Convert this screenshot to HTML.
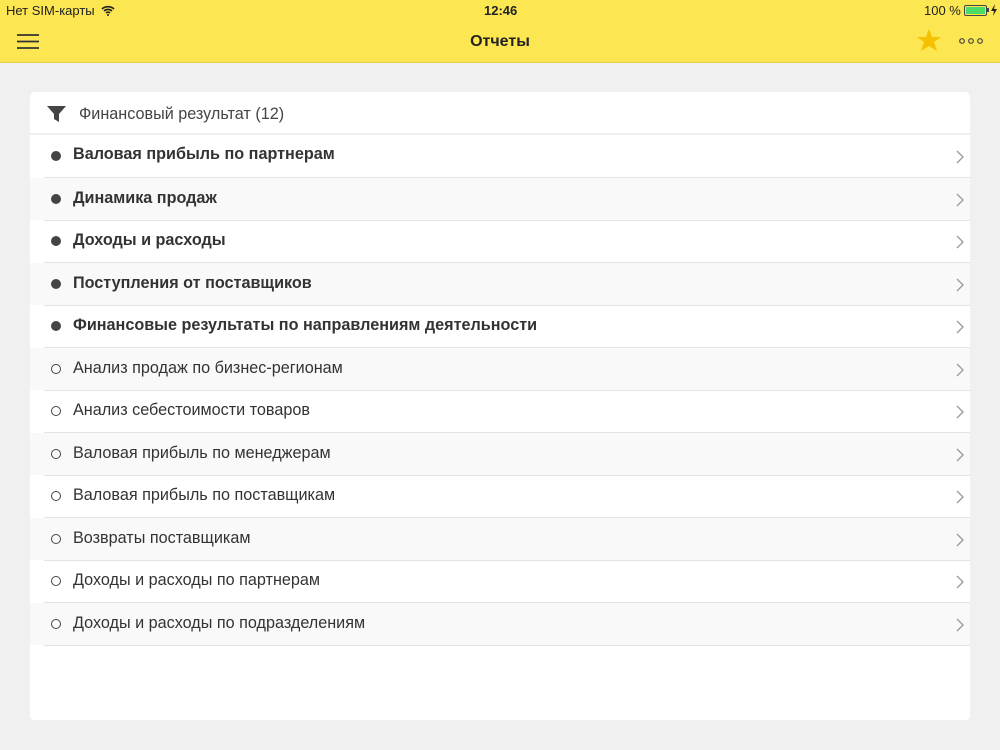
<!DOCTYPE html>
<html><head><meta charset="utf-8"><style>
body{margin:0;width:1000px;height:750px;background:#f0f0f0;font-family:"Liberation Sans",sans-serif;position:relative;overflow:hidden;color:#333}
.top{position:absolute;left:0;top:0;width:1000px;height:62px;background:#fce652;border-bottom:1px solid #e5cf4a}
.sb{position:absolute;top:3px;font-size:13px;color:#222}
.title{position:absolute;top:32px;width:1000px;text-align:center;font-size:16px;font-weight:bold;color:#222}
.hdr{position:absolute;left:30px;top:92px;width:940px;height:41px;background:#fff;border-radius:5px 5px 0 0}
.hdr span{position:absolute;left:49px;top:13px;font-size:16.2px;color:#444}
.list{position:absolute;left:30px;top:135px;width:940px;height:585px;background:#fff;border-radius:0 0 4px 4px}
.row{position:absolute;left:0;width:940px;height:42px}
.row::after{content:"";position:absolute;left:14px;right:0;bottom:-1px;height:1px;background:#e4e4e4}
.row.alt{background:#f9f9f9}
.row .t{position:absolute;left:43px;top:11px;font-size:16.2px;color:#333}
.row.b .t{font-weight:bold}
.dot{position:absolute;left:21px;top:16px;width:10px;height:10px;border-radius:50%;background:#444}
.row:not(.b) .dot{background:none;border:1.5px solid #444;width:8px;height:8px}
.chev{position:absolute;left:926px;top:15px}
</style></head><body>
<div class="top">
<div class="sb" style="left:6px">Нет SIM-карты
<svg width="14" height="11" viewBox="0 0 14 11" style="vertical-align:-1px;margin-left:3px"><path d="M1 4a9 9 0 0 1 12 0M3 6a6 6 0 0 1 8 0M5 8a3 3 0 0 1 4 0" stroke="#222" stroke-width="1.6" fill="none"/><circle cx="7" cy="10" r="1" fill="#222"/></svg></div>
<div class="sb" style="left:484px;font-weight:bold">12:46</div>
<div class="sb" style="left:924px">100 %</div>
<div style="position:absolute;left:964px;top:5px;width:21px;height:9px;border:1px solid #444;border-radius:2px"><div style="margin:1px;height:7px;background:#4cd964"></div></div>
<div style="position:absolute;left:987px;top:8px;width:2px;height:4px;background:#444"></div>
<svg style="position:absolute;left:991px;top:4px" width="6" height="12"><path d="M4 0L0 7h3l-1 5 4-7H3z" fill="#222"/></svg>
<svg style="position:absolute;left:17px;top:34px" width="22" height="16"><path d="M0 1h22M0 7.5h22M0 14h22" stroke="#333" stroke-width="1.8"/></svg>
<div class="title" style="top:33px">Отчеты</div>
<svg style="position:absolute;left:917px;top:29px" width="24" height="23" viewBox="0 0 24 23"><path d="M12 0l3 8h9l-7 5 3 9-8-5-8 5 3-9-7-5h9z" fill="#f6c100"/></svg>
<svg style="position:absolute;left:958px;top:37px" width="26" height="8"><g fill="none" stroke="#444" stroke-width="1.2"><circle cx="4" cy="4" r="2.3"/><circle cx="13" cy="4" r="2.3"/><circle cx="22" cy="4" r="2.3"/></g></svg>
</div>
<div class="hdr"><svg style="position:absolute;left:17px;top:14px" width="19" height="16"><path d="M0 0h19l-7 8v8l-5-3V8z" fill="#444"/></svg><span>Финансовый результат (12)</span></div>
<div class="list">
<div class="row b" style="top:0"><div class="dot"></div><div class="t" style="top:10px">Валовая прибыль по партнерам</div><svg class="chev" width="8" height="14"><path d="M1 1l6 6-6 6" stroke="#999" fill="none" stroke-width="1.3"/></svg></div>
<div class="row b alt" style="top:43px"><div class="dot"></div><div class="t">Динамика продаж</div><svg class="chev" width="8" height="14"><path d="M1 1l6 6-6 6" stroke="#999" fill="none" stroke-width="1.3"/></svg></div>
<div class="row b" style="top:85px"><div class="dot"></div><div class="t">Доходы и расходы</div><svg class="chev" width="8" height="14"><path d="M1 1l6 6-6 6" stroke="#999" fill="none" stroke-width="1.3"/></svg></div>
<div class="row b alt" style="top:128px"><div class="dot"></div><div class="t">Поступления от поставщиков</div><svg class="chev" width="8" height="14"><path d="M1 1l6 6-6 6" stroke="#999" fill="none" stroke-width="1.3"/></svg></div>
<div class="row b" style="top:170px"><div class="dot"></div><div class="t">Финансовые результаты по направлениям деятельности</div><svg class="chev" width="8" height="14"><path d="M1 1l6 6-6 6" stroke="#999" fill="none" stroke-width="1.3"/></svg></div>
<div class="row alt" style="top:213px"><div class="dot"></div><div class="t">Анализ продаж по бизнес-регионам</div><svg class="chev" width="8" height="14"><path d="M1 1l6 6-6 6" stroke="#999" fill="none" stroke-width="1.3"/></svg></div>
<div class="row" style="top:255px"><div class="dot"></div><div class="t">Анализ себестоимости товаров</div><svg class="chev" width="8" height="14"><path d="M1 1l6 6-6 6" stroke="#999" fill="none" stroke-width="1.3"/></svg></div>
<div class="row alt" style="top:298px"><div class="dot"></div><div class="t">Валовая прибыль по менеджерам</div><svg class="chev" width="8" height="14"><path d="M1 1l6 6-6 6" stroke="#999" fill="none" stroke-width="1.3"/></svg></div>
<div class="row" style="top:340px"><div class="dot"></div><div class="t">Валовая прибыль по поставщикам</div><svg class="chev" width="8" height="14"><path d="M1 1l6 6-6 6" stroke="#999" fill="none" stroke-width="1.3"/></svg></div>
<div class="row alt" style="top:383px"><div class="dot"></div><div class="t">Возвраты поставщикам</div><svg class="chev" width="8" height="14"><path d="M1 1l6 6-6 6" stroke="#999" fill="none" stroke-width="1.3"/></svg></div>
<div class="row" style="top:425px"><div class="dot"></div><div class="t">Доходы и расходы по партнерам</div><svg class="chev" width="8" height="14"><path d="M1 1l6 6-6 6" stroke="#999" fill="none" stroke-width="1.3"/></svg></div>
<div class="row alt" style="top:468px"><div class="dot"></div><div class="t">Доходы и расходы по подразделениям</div><svg class="chev" width="8" height="14"><path d="M1 1l6 6-6 6" stroke="#999" fill="none" stroke-width="1.3"/></svg></div>
</div>
</body></html>
